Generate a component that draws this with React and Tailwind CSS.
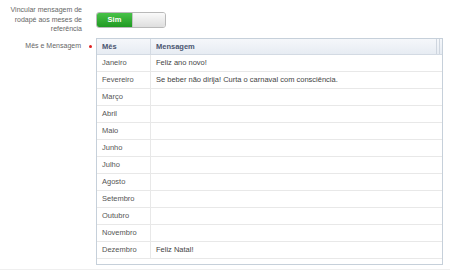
import React from "react";

const rows = [
  { mes: "Janeiro", msg: "Feliz ano novo!" },
  { mes: "Fevereiro", msg: "Se beber não dirija! Curta o carnaval com consciência." },
  { mes: "Março", msg: "" },
  { mes: "Abril", msg: "" },
  { mes: "Maio", msg: "" },
  { mes: "Junho", msg: "" },
  { mes: "Julho", msg: "" },
  { mes: "Agosto", msg: "" },
  { mes: "Setembro", msg: "" },
  { mes: "Outubro", msg: "" },
  { mes: "Novembro", msg: "" },
  { mes: "Dezembro", msg: "Feliz Natal!" },
];

function Toggle() {
  return (
    <div className="flex h-[16px] w-[70px] overflow-hidden rounded-[3px] border border-[#b9b9b9]">
      <div className="flex w-[35px] items-center justify-center bg-gradient-to-b from-[#48c248] to-[#1f9a22] text-[7.5px] font-bold text-white">
        Sim
      </div>
      <div className="flex-1 border-l border-[#c4c4c4] bg-gradient-to-b from-[#fafafa] to-[#dedede]" />
    </div>
  );
}

function App() {
  return (
    <div
      className="h-[271px] w-[450px] bg-white"
      style={{ fontFamily: '"Liberation Sans", Arial, sans-serif' }}
    >
      <div className="h-[270px] border-b border-[#efefef]">
        {/* vincular */}
        <div className="flex h-[38px]">
          <div className="w-[96px] pr-[14px] pt-[5px] text-right text-[7px] leading-[9.5px] text-[#666]">
            Vincular mensagem de
            <br />
            rodapé aos meses de
            <br />
            referência
          </div>
          <div className="pt-[12px]">
            <Toggle />
          </div>
        </div>

        {/* mes e mensagem */}
        <div className="flex">
          <div className="flex w-[96px] items-center justify-end self-start pt-[3px]">
            <span className="text-[7px] leading-[10px] text-[#666]">Mês e Mensagem</span>
            <span className="ml-[8px] mr-[4px] h-[3px] w-[3px] rounded-full bg-[#e02020]" />
          </div>

          <div className="w-[347px] border border-[#c6d0da] pb-[5px] text-[7.5px] text-[#555]">
            <div className="flex h-[16px] border-b border-[#d3dae3] bg-gradient-to-b from-[#f5f7fa] to-[#e7ecf3] font-bold text-[#4a5670]">
              <div className="flex w-[54px] items-center border-r border-[#d3dae3] pl-[5px]">Mês</div>
              <div className="flex flex-1 items-center pl-[5px]">Mensagem</div>
              <div className="w-[6px] border-l border-[#cfd6df]">
                <div className="h-full w-[3px] border-r border-[#cfd6df]" />
              </div>
            </div>
            {rows.map((r) => (
              <div key={r.mes} className="flex h-[17px] border-b border-[#e8e8e8]">
                <div className="flex w-[54px] items-center border-r border-[#e8e8e8] pl-[5px]">
                  {r.mes}
                </div>
                <div className="flex flex-1 items-center pl-[5px] text-[#444]">{r.msg}</div>
              </div>
            ))}
          </div>
        </div>
      </div>
    </div>
  );
}

export default App;
